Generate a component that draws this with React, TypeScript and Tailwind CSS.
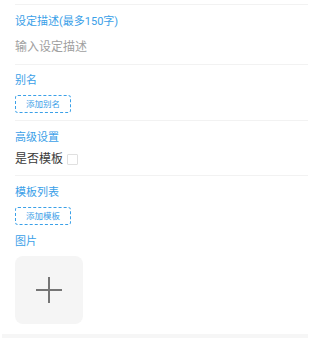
import React from "react";

const font = { fontFamily: 'Roboto, "Noto Sans CJK SC", "Noto Sans", sans-serif' };

function Label({ children }: { children: React.ReactNode }) {
  return <div className="text-[11px] leading-[14px] text-[#3aa0e8]">{children}</div>;
}

function DashedButton({ children }: { children: React.ReactNode }) {
  return (
    <div className="w-[56px] h-[18px] border border-dashed border-[#3aa0e8] rounded-[3px] flex items-center justify-center text-[8.5px] leading-none text-[#3aa0e8]">
      {children}
    </div>
  );
}

export default function App() {
  return (
    <div className="w-[318px] h-[338px] bg-white overflow-hidden" style={font}>
      <div className="h-[4px]" />
      <div className="pl-[15px] pr-[10px]">
        {/* Description */}
        <div className="border-t border-b border-[#f2f2f2] pt-[10px] pb-[7px]">
          <Label>设定描述(最多150字)</Label>
          <div className="mt-[8px] text-[12px] leading-[20px] text-[#a0a0a0]">输入设定描述</div>
        </div>

        {/* Alias */}
        <div className="border-b border-[#f2f2f2] pt-[9px] pb-[7px]">
          <Label>别名</Label>
          <div className="mt-[7px]">
            <DashedButton>添加别名</DashedButton>
          </div>
        </div>

        {/* Advanced */}
        <div className="border-b border-[#f2f2f2] pt-[10px] pb-[6px]">
          <Label>高级设置</Label>
          <div className="mt-[4px] flex items-center h-[20px]">
            <span className="text-[12px] leading-[20px] text-[#3a3a3a]">是否模板</span>
            <span className="ml-[4px] w-[11px] h-[11px] border border-[#e0e0e0] rounded-[1px] bg-white" />
          </div>
        </div>

        {/* Templates & image */}
        <div className="pt-[10px] pb-[10px]">
          <Label>模板列表</Label>
          <div className="mt-[7px]">
            <DashedButton>添加模板</DashedButton>
          </div>
          <div className="mt-[10px]">
            <Label>图片</Label>
          </div>
          <div className="mt-[7px] w-[68px] h-[68px] rounded-[8px] bg-[#f5f5f5] flex items-center justify-center">
            <svg width="28" height="28" viewBox="0 0 28 28">
              <path d="M14 1v26M1 14h26" stroke="#757575" strokeWidth="2" fill="none" />
            </svg>
          </div>
        </div>
      </div>
      <div className="ml-[2px] w-[306px] h-[10px] bg-[#f6f6f6]" />
    </div>
  );
}
